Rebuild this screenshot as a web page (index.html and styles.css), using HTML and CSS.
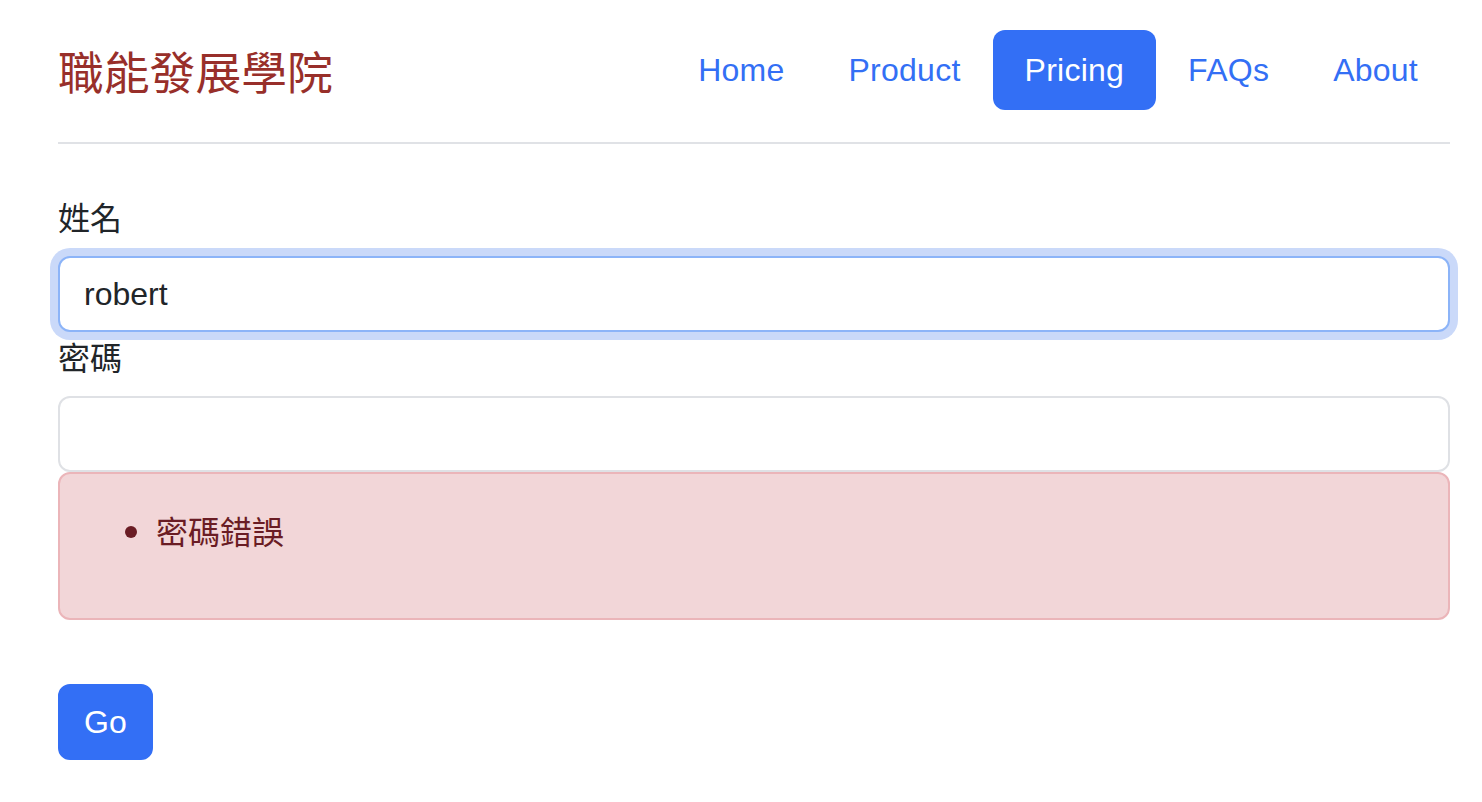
FILE: index.html
```html
<!DOCTYPE html>
<html lang="zh-Hant">
<head>
<meta charset="utf-8">
<title>職能發展學院</title>
<link rel="stylesheet" href="styles.css">
</head>
<body>
<div class="page">
  <header class="site-header">
    <a class="brand" href="#">職能發展學院</a>
    <nav>
      <ul class="nav">
        <li><a class="nav-link" href="#">Home</a></li>
        <li><a class="nav-link" href="#">Product</a></li>
        <li><a class="nav-link active" href="#">Pricing</a></li>
        <li><a class="nav-link" href="#">FAQs</a></li>
        <li><a class="nav-link" href="#">About</a></li>
      </ul>
    </nav>
  </header>
  <form class="login-form">
    <label class="form-label" for="name">姓名</label>
    <input class="form-control is-focused" id="name" type="text" value="robert">
    <label class="form-label" for="pwd">密碼</label>
    <input class="form-control" id="pwd" type="password">
    <div class="alert">
      <ul class="alert-list">
        <li>密碼錯誤</li>
      </ul>
    </div>
    <button class="btn" type="button">Go</button>
  </form>
</div>
</body>
</html>
```

FILE: styles.css
```css
* { box-sizing: border-box; }

body {
  margin: 0;
  background: #fff;
  color: #212529;
  font-family: "Liberation Sans", "Noto Sans CJK TC", sans-serif;
  font-size: 32px;
  line-height: 1.5;
}

.page {
  width: 1392px;
  margin-left: 58px;
}

.site-header {
  display: flex;
  align-items: center;
  padding: 30px 0 32px;
  border-bottom: 2px solid #e0e2e6;
  margin-bottom: 48px;
}

.brand {
  margin-right: auto;
  color: #982f2a;
  font-family: "Noto Sans CJK TC", sans-serif;
  font-size: 45.8px;
  line-height: 68px;
  text-decoration: none;
}

.nav {
  display: flex;
  list-style: none;
  margin: 0;
  padding: 0;
}

.nav-link {
  display: block;
  padding: 16px 32px;
  font-size: 32px;
  line-height: 48px;
  letter-spacing: 0.25px;
  color: #336ff5;
  text-decoration: none;
  border-radius: 12px;
}

.nav-link.active {
  background: #336ff5;
  color: #fff;
}

.form-label {
  display: block;
  margin-bottom: 16px;
  font-family: "Noto Sans CJK TC", sans-serif;
  line-height: 48px;
}

.form-control {
  display: block;
  width: 100%;
  height: 76px;
  padding: 12px 24px;
  font-family: "Liberation Sans", sans-serif;
  font-size: 32px;
  line-height: 48px;
  color: #212529;
  background: #fff;
  border: 2px solid #dfe1e5;
  border-radius: 12px;
  outline: none;
}

.form-control.is-focused {
  border-color: #8cb4f8;
  box-shadow: 0 0 0 8px #cad9f9;
}

.alert {
  padding: 32px;
  background: #f2d6d8;
  color: #6a1c24;
  border: 2px solid #ebb5b9;
  border-radius: 12px;
  margin-bottom: 32px;
  font-family: "Noto Sans CJK TC", sans-serif;
}

.alert-list {
  margin: 0 0 32px;
  padding-left: 64px;
}

.btn {
  display: inline-block;
  margin-top: 32px;
  padding: 12px 24px;
  font-family: "Liberation Sans", sans-serif;
  font-size: 32px;
  line-height: 48px;
  color: #fff;
  background: #336ff5;
  border: 2px solid #336ff5;
  border-radius: 12px;
  cursor: pointer;
}
```
